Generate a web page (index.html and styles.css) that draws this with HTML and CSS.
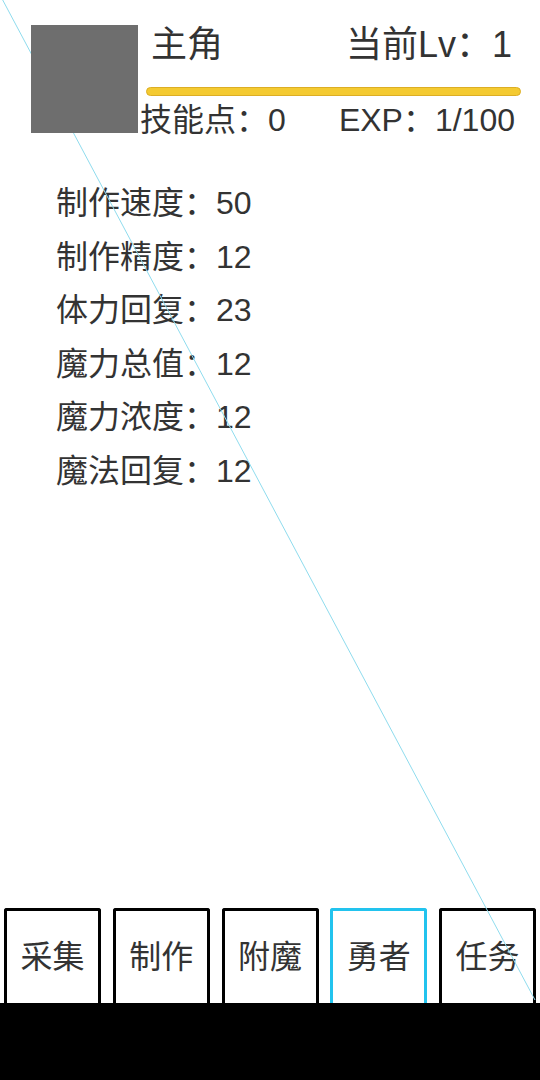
FILE: index.html
```
<!DOCTYPE html>
<html lang="zh">
  <head>
    <meta charset="utf-8" />
    <meta name="viewport" content="width=device-width, initial-scale=1.0" />
    <title>主角</title>
    <link rel="stylesheet" href="styles.css">
  </head>
  <body>
    <svg class="guide-line" width="540" height="1080" viewBox="0 0 540 1080">
      <line x1="2.7" y1="0" x2="535" y2="1000" stroke="#8fdcee" stroke-width="1" />
    </svg>

    <header class="hero">
      <div class="avatar"></div>
      <div class="hero-info">
        <div class="hero-top">
          <span class="name">主角</span>
          <span class="level">当前Lv：1</span>
        </div>
        <div class="exp-bar"><div class="exp-fill"></div></div>
        <div class="hero-bottom">
          <span>技能点：0</span>
          <span>EXP：1/100</span>
        </div>
      </div>
    </header>

    <ul class="stats">
      <li>制作速度：50</li>
      <li>制作精度：12</li>
      <li>体力回复：23</li>
      <li>魔力总值：12</li>
      <li>魔力浓度：12</li>
      <li>魔法回复：12</li>
    </ul>

    <div class="spacer"></div>

    <nav class="tabs">
      <a href="#" class="tab">采集</a>
      <a href="#" class="tab">制作</a>
      <a href="#" class="tab">附魔</a>
      <a href="#" class="tab active">勇者</a>
      <a href="#" class="tab">任务</a>
    </nav>
    <footer class="bottom-bar"></footer>
  </body>
</html>
```

FILE: styles.css
```
/* General Reset */
* {
  margin: 0;
  padding: 0;
  box-sizing: border-box;
}

html, body {
  width: 540px;
  height: 1080px;
  overflow: hidden;
}

body {
  position: relative;
  display: flex;
  flex-direction: column;
  background-color: #fff;
  color: #333;
  font-family: "Liberation Sans", "Noto Sans CJK SC", sans-serif;
}

/* thin diagonal line across the page */
.guide-line {
  position: absolute;
  top: 0;
  left: 0;
  z-index: 1;
  pointer-events: none;
}

/* Header */
.hero {
  display: flex;
  padding: 25px 0 0 31px;
}

.avatar {
  position: relative;
  z-index: 2;
  width: 107px;
  height: 108px;
  background-color: #6e6e6e;
  flex-shrink: 0;
}

.hero-info {
  flex: 1;
  display: flex;
  flex-direction: column;
  margin-top: -1px;
}

.hero-top {
  display: flex;
  justify-content: space-between;
  padding: 0 28px 0 13px;
  font-size: 36px;
  line-height: 42px;
}

.exp-bar {
  margin: 21px 0 0 8px;
  width: 375px;
  height: 9px;
  border-radius: 5px;
  background-color: #f4ca31;
  border: 1px solid #dcae25;
}

.exp-fill {
  width: 0;
  height: 100%;
}

.hero-bottom {
  display: flex;
  justify-content: space-between;
  padding: 0 25px 0 2px;
  margin-top: 4px;
  font-size: 32px;
  line-height: 40px;
}

/* Stats */
.stats {
  list-style: none;
  padding: 37px 0 0 56px;
  font-size: 32px;
  line-height: 53.5px;
}

.spacer {
  flex: 1;
}

/* Tabs */
.tabs {
  display: flex;
  justify-content: space-between;
  padding: 0 4px;
}

.tab {
  width: 97px;
  height: 95px;
  display: flex;
  align-items: center;
  justify-content: center;
  border: 3px solid #000;
  border-bottom: none;
  border-radius: 3px 3px 0 0;
  color: #333;
  text-decoration: none;
  font-size: 32px;
  padding-bottom: 7px;
}

.tab.active {
  border-color: #22c3ee;
}

.bottom-bar {
  position: relative;
  z-index: 2;
  height: 77px;
  background-color: #000;
}
```
